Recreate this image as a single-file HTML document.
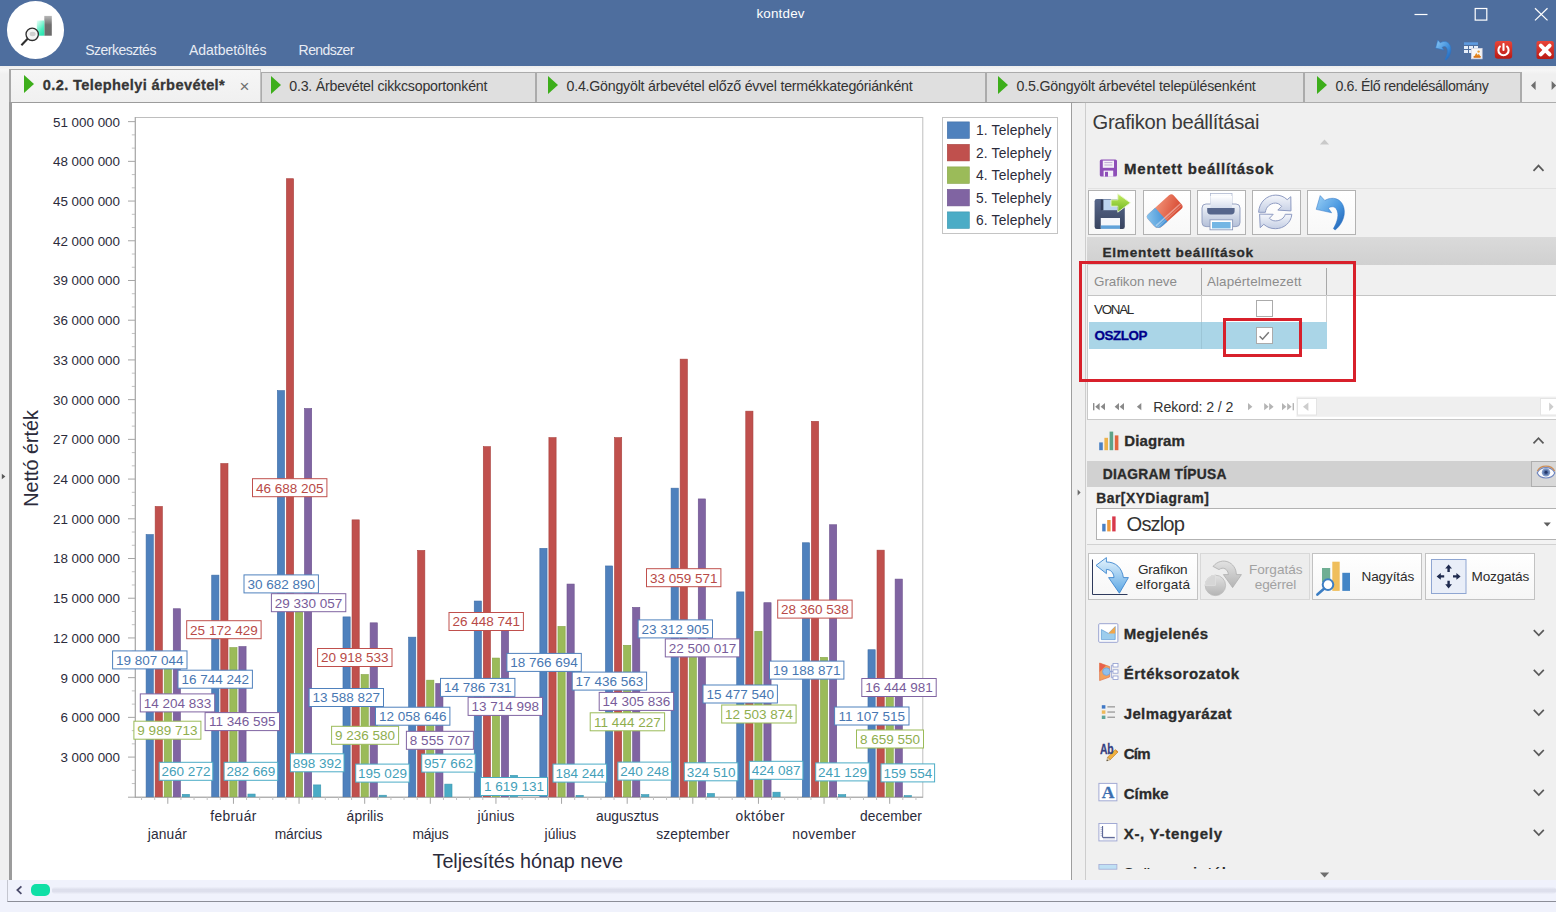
<!DOCTYPE html>
<html lang="hu">
<head>
<meta charset="utf-8">
<title>kontdev</title>
<style>
html,body{margin:0;padding:0;}
body{width:1556px;height:912px;overflow:hidden;position:relative;background:#F0F0F0;
  font-family:"Liberation Sans",sans-serif;font-size:13.4px;color:#2B2B2B;}
.abs{position:absolute;}
svg{position:absolute;overflow:visible;}
svg.chart{left:10px;top:104px;}
#titlebar{position:absolute;left:0;top:0;width:1556px;height:66px;background:#4E6E9E;}
#logo{position:absolute;left:7px;top:1.3px;width:57.4px;height:57.6px;border-radius:50%;background:#fff;}
#tabstrip{position:absolute;left:0;top:66px;width:1556px;height:38px;background:linear-gradient(#EDEDED,#F6F6F6 4px,#F0F0F0 8px);}
.tab{position:absolute;top:71.6px;height:30.4px;box-sizing:border-box;border:2px solid #ABABAB;border-top-width:1.4px;border-bottom:none;background:#DFDFDF;}
.tab.active{top:68.6px;height:33.4px;background:linear-gradient(#F6F6F6,#F0F0F0);border-color:#A8A8A8;border-right:1.2px solid #C2C2C2;}
.tri{position:absolute;width:0;height:0;border-style:solid;border-color:transparent transparent transparent #3DAE1B;border-right-width:0;}
#tabline{position:absolute;left:9px;top:101.6px;width:1547px;height:1.9px;background:linear-gradient(90deg,#9C9C9C 1063px,#ACACAC 1076px);}
#chartpanel{position:absolute;left:9px;top:103.4px;width:1063px;height:776.4px;background:#fff;border-left:3px solid #9C9C9C;border-right:1.1px solid #9E9E9E;box-sizing:border-box;}
#rightpanel{position:absolute;left:1084.7px;top:103.4px;width:472px;height:776.4px;background:#F0F0F0;border-left:1.2px solid #CDCDCD;box-sizing:border-box;}
#bottom{position:absolute;left:0;top:880px;width:1556px;height:32px;background:#F0F2FC;}
#bottomline{position:absolute;left:7px;top:880px;width:1549px;height:20.6px;border-left:1.2px solid #C4C6D0;border-bottom:1.9px solid #8C8E98;}

</style>
</head>
<body>
<div id="titlebar"></div>
<div class="abs" style="left:756.50px;top:7.26px;font-size:13.4px;line-height:1;color:#FFFFFF;white-space:pre;letter-spacing:0.178px;">kontdev</div>
<div id="logo"></div>
<svg class="ov" width="1556" height="912" viewBox="0 0 1556 912" style="left:0;top:0;pointer-events:none"><defs><linearGradient id="lgG" x1="0" y1="0" x2="0" y2="1"><stop offset="0" stop-color="#B8B8B8"/><stop offset="0.45" stop-color="#6E6E6E"/><stop offset="1" stop-color="#6A6A6A"/></linearGradient><linearGradient id="lgT" x1="0" y1="0" x2="0.6" y2="1"><stop offset="0" stop-color="#EFFFFA"/><stop offset="0.7" stop-color="#4FEEC0"/><stop offset="1" stop-color="#2FE6B2"/></linearGradient></defs><rect x="44.3" y="15.9" width="7.5" height="19.8" fill="url(#lgG)"/><rect x="36.8" y="20.5" width="7.5" height="15.2" fill="url(#lgT)"/><circle cx="32.2" cy="34.3" r="6.2" fill="#F4F4F4" fill-opacity="0.92" stroke="#2E2E2E" stroke-width="1.3"/><ellipse cx="32.6" cy="34" rx="3" ry="2.2" fill="#CFCFCF"/><line x1="27.6" y1="38.8" x2="21.4" y2="45.2" stroke="#2E2E2E" stroke-width="2.1"/></svg>
<div class="abs" style="left:85.20px;top:43.35px;font-size:14px;line-height:1;color:#E8ECF4;white-space:pre;letter-spacing:-0.505px;">Szerkesztés</div>
<div class="abs" style="left:189.00px;top:43.35px;font-size:14px;line-height:1;color:#E8ECF4;white-space:pre;letter-spacing:-0.021px;">Adatbetöltés</div>
<div class="abs" style="left:298.60px;top:43.35px;font-size:14px;line-height:1;color:#E8ECF4;white-space:pre;letter-spacing:-0.574px;">Rendszer</div>
<svg class="ov" width="1556" height="912" viewBox="0 0 1556 912" style="left:0;top:0;pointer-events:none"><defs><linearGradient id="unG" x1="0" y1="0" x2="1" y2="1"><stop offset="0" stop-color="#8CC8F4"/><stop offset="0.6" stop-color="#3E8EDC"/><stop offset="1" stop-color="#1A5CB0"/></linearGradient><linearGradient id="rdG" x1="0" y1="0" x2="0" y2="1"><stop offset="0" stop-color="#E8453A"/><stop offset="1" stop-color="#B91A14"/></linearGradient></defs><g stroke="#FFFFFF" stroke-width="1.2" fill="none"><line x1="1414.5" y1="14.5" x2="1427.5" y2="14.5"/><rect x="1475.2" y="8.5" width="11.6" height="11.6"/><line x1="1535" y1="8.2" x2="1547.5" y2="20.4"/><line x1="1547.5" y1="8.2" x2="1535" y2="20.4"/></g><path d="M1435.60 48.08 L1437.78 40.00 L1440.28 42.83 C1444.18 40.40 1449.33 41.21 1450.73 47.27 C1451.82 52.52 1449.02 57.78 1445.90 60.20 L1444.96 59.39 C1447.14 55.35 1448.39 50.91 1446.52 47.68 C1445.27 46.06 1443.71 46.46 1442.15 47.27 L1444.02 50.10 Z" fill="url(#unG)" stroke="#2D73C4" stroke-width="0.5" stroke-linejoin="round"/><g><rect x="1464" y="42.3" width="14" height="2.6" fill="#5E9BE0"/><rect x="1464" y="46" width="4" height="3" fill="#E6EEF9"/><rect x="1469" y="46" width="4" height="3" fill="#E6EEF9"/><rect x="1474" y="46" width="4" height="3" fill="#E6EEF9"/><rect x="1464" y="50" width="4" height="3" fill="#E6EEF9"/><rect x="1469" y="50" width="4" height="3" fill="#E6EEF9"/><rect x="1471.5" y="48.5" width="10.6" height="10.3" fill="#F6F6F6" stroke="#D9D9E4" stroke-width="0.8"/><path d="M1474 57 l2.2-4 1.6 2 1-1.2 2 3.2z" fill="#E58A1E"/><circle cx="1478.6" cy="51.6" r="1.2" fill="#E9A23A"/><rect x="1473.6" y="56" width="7" height="1.8" fill="#D9761A"/></g><rect x="1494.8" y="41" width="17.4" height="17.8" rx="3.2" fill="url(#rdG)"/><path d="M1499.9 46.6 a5.1 5.1 0 1 0 7.2 0" fill="none" stroke="#FFFFFF" stroke-width="2.1" stroke-linecap="round"/><line x1="1503.5" y1="44" x2="1503.5" y2="50" stroke="#FFFFFF" stroke-width="2.1" stroke-linecap="round"/><rect x="1536.5" y="41" width="17.4" height="18" rx="2" fill="url(#rdG)"/><g stroke="#FFFFFF" stroke-width="4" stroke-linecap="round"><line x1="1540.8" y1="45.6" x2="1549.6" y2="54.4"/><line x1="1549.6" y1="45.6" x2="1540.8" y2="54.4"/></g></svg>
<div id="tabstrip"></div>
<div class="tab" style="left:259.6px;width:277.4px"></div>
<div class="tab" style="left:534.6px;width:452.8px"></div>
<div class="tab" style="left:985.4px;width:320.4px"></div>
<div class="tab" style="left:1303.4px;width:219px"></div>
<div class="tab active" style="left:9px;width:251.6px"></div>
<div id="tabline"></div>
<div class="tri" style="left:24.3px;top:75.3px;border-left-width:10px;border-top-width:9.3px;border-bottom-width:9.3px"></div>
<div class="tri" style="left:271px;top:76.4px;border-left-width:10px;border-top-width:9.3px;border-bottom-width:9.3px"></div>
<div class="tri" style="left:548.2px;top:76.4px;border-left-width:10px;border-top-width:9.3px;border-bottom-width:9.3px"></div>
<div class="tri" style="left:998.4px;top:76.4px;border-left-width:10px;border-top-width:9.3px;border-bottom-width:9.3px"></div>
<div class="tri" style="left:1317.2px;top:76.4px;border-left-width:10px;border-top-width:9.3px;border-bottom-width:9.3px"></div>
<div class="abs" style="left:42.80px;top:77.94px;font-size:14.6px;line-height:1;color:#363636;white-space:pre;letter-spacing:0.377px;font-weight:bold;-webkit-text-stroke:0.3px currentColor;">0.2. Telephelyi árbevétel*</div>
<div class="abs" style="left:239.60px;top:78.21px;font-size:17px;line-height:1;color:#707070;white-space:pre;">×</div>
<div class="abs" style="left:289.30px;top:79.38px;font-size:14.2px;line-height:1;color:#333;white-space:pre;letter-spacing:-0.223px;">0.3. Árbevétel cikkcsoportonként</div>
<div class="abs" style="left:566.50px;top:79.38px;font-size:14.2px;line-height:1;color:#333;white-space:pre;letter-spacing:-0.220px;">0.4.Göngyölt árbevétel előző évvel termékkategóriánként</div>
<div class="abs" style="left:1016.50px;top:79.38px;font-size:14.2px;line-height:1;color:#333;white-space:pre;letter-spacing:-0.184px;">0.5.Göngyölt árbevétel településenként</div>
<div class="abs" style="left:1335.50px;top:79.38px;font-size:14.2px;line-height:1;color:#333;white-space:pre;letter-spacing:-0.413px;">0.6. Élő rendelésállomány</div>
<svg class="ov" width="1556" height="912" viewBox="0 0 1556 912" style="left:0;top:0;pointer-events:none"><path d="M1531 85.5 l4.6-4.6 v9.2z" fill="#6E6E6E"/><path d="M1551.6 80.9 v9.2 l4.6-4.6z" fill="#6E6E6E"/></svg>
<div id="chartpanel"></div>
<svg class="chart" width="1062" height="776" viewBox="10 104 1062 776" font-family="'Liberation Sans', sans-serif" shape-rendering="crispEdges">
<rect x="135.3" y="117.5" width="787.5" height="679.8" fill="#fff" stroke="#BEBEBE" stroke-width="1" shape-rendering="auto"/>
<g stroke="#A6A6A6" stroke-width="1" shape-rendering="auto">
<line x1="131.8" x2="135" y1="783.56" y2="783.56" stroke="#C2C2C2"/>
<line x1="131.8" x2="135" y1="770.32" y2="770.32" stroke="#C2C2C2"/>
<line x1="128" x2="135" y1="757.08" y2="757.08"/>
<line x1="131.8" x2="135" y1="743.85" y2="743.85" stroke="#C2C2C2"/>
<line x1="131.8" x2="135" y1="730.61" y2="730.61" stroke="#C2C2C2"/>
<line x1="128" x2="135" y1="717.37" y2="717.37"/>
<line x1="131.8" x2="135" y1="704.13" y2="704.13" stroke="#C2C2C2"/>
<line x1="131.8" x2="135" y1="690.89" y2="690.89" stroke="#C2C2C2"/>
<line x1="128" x2="135" y1="677.65" y2="677.65"/>
<line x1="131.8" x2="135" y1="664.41" y2="664.41" stroke="#C2C2C2"/>
<line x1="131.8" x2="135" y1="651.18" y2="651.18" stroke="#C2C2C2"/>
<line x1="128" x2="135" y1="637.94" y2="637.94"/>
<line x1="131.8" x2="135" y1="624.7" y2="624.7" stroke="#C2C2C2"/>
<line x1="131.8" x2="135" y1="611.46" y2="611.46" stroke="#C2C2C2"/>
<line x1="128" x2="135" y1="598.22" y2="598.22"/>
<line x1="131.8" x2="135" y1="584.98" y2="584.98" stroke="#C2C2C2"/>
<line x1="131.8" x2="135" y1="571.74" y2="571.74" stroke="#C2C2C2"/>
<line x1="128" x2="135" y1="558.51" y2="558.51"/>
<line x1="131.8" x2="135" y1="545.27" y2="545.27" stroke="#C2C2C2"/>
<line x1="131.8" x2="135" y1="532.03" y2="532.03" stroke="#C2C2C2"/>
<line x1="128" x2="135" y1="518.79" y2="518.79"/>
<line x1="131.8" x2="135" y1="505.55" y2="505.55" stroke="#C2C2C2"/>
<line x1="131.8" x2="135" y1="492.31" y2="492.31" stroke="#C2C2C2"/>
<line x1="128" x2="135" y1="479.07" y2="479.07"/>
<line x1="131.8" x2="135" y1="465.83" y2="465.83" stroke="#C2C2C2"/>
<line x1="131.8" x2="135" y1="452.6" y2="452.6" stroke="#C2C2C2"/>
<line x1="128" x2="135" y1="439.36" y2="439.36"/>
<line x1="131.8" x2="135" y1="426.12" y2="426.12" stroke="#C2C2C2"/>
<line x1="131.8" x2="135" y1="412.88" y2="412.88" stroke="#C2C2C2"/>
<line x1="128" x2="135" y1="399.64" y2="399.64"/>
<line x1="131.8" x2="135" y1="386.4" y2="386.4" stroke="#C2C2C2"/>
<line x1="131.8" x2="135" y1="373.16" y2="373.16" stroke="#C2C2C2"/>
<line x1="128" x2="135" y1="359.93" y2="359.93"/>
<line x1="131.8" x2="135" y1="346.69" y2="346.69" stroke="#C2C2C2"/>
<line x1="131.8" x2="135" y1="333.45" y2="333.45" stroke="#C2C2C2"/>
<line x1="128" x2="135" y1="320.21" y2="320.21"/>
<line x1="131.8" x2="135" y1="306.97" y2="306.97" stroke="#C2C2C2"/>
<line x1="131.8" x2="135" y1="293.73" y2="293.73" stroke="#C2C2C2"/>
<line x1="128" x2="135" y1="280.49" y2="280.49"/>
<line x1="131.8" x2="135" y1="267.26" y2="267.26" stroke="#C2C2C2"/>
<line x1="131.8" x2="135" y1="254.02" y2="254.02" stroke="#C2C2C2"/>
<line x1="128" x2="135" y1="240.78" y2="240.78"/>
<line x1="131.8" x2="135" y1="227.54" y2="227.54" stroke="#C2C2C2"/>
<line x1="131.8" x2="135" y1="214.3" y2="214.3" stroke="#C2C2C2"/>
<line x1="128" x2="135" y1="201.06" y2="201.06"/>
<line x1="131.8" x2="135" y1="187.82" y2="187.82" stroke="#C2C2C2"/>
<line x1="131.8" x2="135" y1="174.59" y2="174.59" stroke="#C2C2C2"/>
<line x1="128" x2="135" y1="161.35" y2="161.35"/>
<line x1="131.8" x2="135" y1="148.11" y2="148.11" stroke="#C2C2C2"/>
<line x1="131.8" x2="135" y1="134.87" y2="134.87" stroke="#C2C2C2"/>
<line x1="128" x2="135" y1="121.63" y2="121.63"/>
<line x1="135.3" x2="135.3" y1="117.0" y2="797.6999999999999"/>
<line x1="128" x2="923.0" y1="797.1999999999999" y2="797.1999999999999"/>
<line x1="167.81" x2="167.81" y1="797.1999999999999" y2="803.8"/>
<line x1="141.56" x2="141.56" y1="797.1999999999999" y2="800.0" stroke="#C2C2C2"/>
<line x1="154.69" x2="154.69" y1="797.1999999999999" y2="800.0" stroke="#C2C2C2"/>
<line x1="180.94" x2="180.94" y1="797.1999999999999" y2="800.0" stroke="#C2C2C2"/>
<line x1="194.06" x2="194.06" y1="797.1999999999999" y2="800.0" stroke="#C2C2C2"/>
<line x1="233.44" x2="233.44" y1="797.1999999999999" y2="803.8"/>
<line x1="207.19" x2="207.19" y1="797.1999999999999" y2="800.0" stroke="#C2C2C2"/>
<line x1="220.31" x2="220.31" y1="797.1999999999999" y2="800.0" stroke="#C2C2C2"/>
<line x1="246.56" x2="246.56" y1="797.1999999999999" y2="800.0" stroke="#C2C2C2"/>
<line x1="259.69" x2="259.69" y1="797.1999999999999" y2="800.0" stroke="#C2C2C2"/>
<line x1="299.06" x2="299.06" y1="797.1999999999999" y2="803.8"/>
<line x1="272.81" x2="272.81" y1="797.1999999999999" y2="800.0" stroke="#C2C2C2"/>
<line x1="285.94" x2="285.94" y1="797.1999999999999" y2="800.0" stroke="#C2C2C2"/>
<line x1="312.19" x2="312.19" y1="797.1999999999999" y2="800.0" stroke="#C2C2C2"/>
<line x1="325.31" x2="325.31" y1="797.1999999999999" y2="800.0" stroke="#C2C2C2"/>
<line x1="364.69" x2="364.69" y1="797.1999999999999" y2="803.8"/>
<line x1="338.44" x2="338.44" y1="797.1999999999999" y2="800.0" stroke="#C2C2C2"/>
<line x1="351.56" x2="351.56" y1="797.1999999999999" y2="800.0" stroke="#C2C2C2"/>
<line x1="377.81" x2="377.81" y1="797.1999999999999" y2="800.0" stroke="#C2C2C2"/>
<line x1="390.94" x2="390.94" y1="797.1999999999999" y2="800.0" stroke="#C2C2C2"/>
<line x1="430.31" x2="430.31" y1="797.1999999999999" y2="803.8"/>
<line x1="404.06" x2="404.06" y1="797.1999999999999" y2="800.0" stroke="#C2C2C2"/>
<line x1="417.19" x2="417.19" y1="797.1999999999999" y2="800.0" stroke="#C2C2C2"/>
<line x1="443.44" x2="443.44" y1="797.1999999999999" y2="800.0" stroke="#C2C2C2"/>
<line x1="456.56" x2="456.56" y1="797.1999999999999" y2="800.0" stroke="#C2C2C2"/>
<line x1="495.94" x2="495.94" y1="797.1999999999999" y2="803.8"/>
<line x1="469.69" x2="469.69" y1="797.1999999999999" y2="800.0" stroke="#C2C2C2"/>
<line x1="482.81" x2="482.81" y1="797.1999999999999" y2="800.0" stroke="#C2C2C2"/>
<line x1="509.06" x2="509.06" y1="797.1999999999999" y2="800.0" stroke="#C2C2C2"/>
<line x1="522.19" x2="522.19" y1="797.1999999999999" y2="800.0" stroke="#C2C2C2"/>
<line x1="561.56" x2="561.56" y1="797.1999999999999" y2="803.8"/>
<line x1="535.31" x2="535.31" y1="797.1999999999999" y2="800.0" stroke="#C2C2C2"/>
<line x1="548.44" x2="548.44" y1="797.1999999999999" y2="800.0" stroke="#C2C2C2"/>
<line x1="574.69" x2="574.69" y1="797.1999999999999" y2="800.0" stroke="#C2C2C2"/>
<line x1="587.81" x2="587.81" y1="797.1999999999999" y2="800.0" stroke="#C2C2C2"/>
<line x1="627.19" x2="627.19" y1="797.1999999999999" y2="803.8"/>
<line x1="600.94" x2="600.94" y1="797.1999999999999" y2="800.0" stroke="#C2C2C2"/>
<line x1="614.06" x2="614.06" y1="797.1999999999999" y2="800.0" stroke="#C2C2C2"/>
<line x1="640.31" x2="640.31" y1="797.1999999999999" y2="800.0" stroke="#C2C2C2"/>
<line x1="653.44" x2="653.44" y1="797.1999999999999" y2="800.0" stroke="#C2C2C2"/>
<line x1="692.81" x2="692.81" y1="797.1999999999999" y2="803.8"/>
<line x1="666.56" x2="666.56" y1="797.1999999999999" y2="800.0" stroke="#C2C2C2"/>
<line x1="679.69" x2="679.69" y1="797.1999999999999" y2="800.0" stroke="#C2C2C2"/>
<line x1="705.94" x2="705.94" y1="797.1999999999999" y2="800.0" stroke="#C2C2C2"/>
<line x1="719.06" x2="719.06" y1="797.1999999999999" y2="800.0" stroke="#C2C2C2"/>
<line x1="758.44" x2="758.44" y1="797.1999999999999" y2="803.8"/>
<line x1="732.19" x2="732.19" y1="797.1999999999999" y2="800.0" stroke="#C2C2C2"/>
<line x1="745.31" x2="745.31" y1="797.1999999999999" y2="800.0" stroke="#C2C2C2"/>
<line x1="771.56" x2="771.56" y1="797.1999999999999" y2="800.0" stroke="#C2C2C2"/>
<line x1="784.69" x2="784.69" y1="797.1999999999999" y2="800.0" stroke="#C2C2C2"/>
<line x1="824.06" x2="824.06" y1="797.1999999999999" y2="803.8"/>
<line x1="797.81" x2="797.81" y1="797.1999999999999" y2="800.0" stroke="#C2C2C2"/>
<line x1="810.94" x2="810.94" y1="797.1999999999999" y2="800.0" stroke="#C2C2C2"/>
<line x1="837.19" x2="837.19" y1="797.1999999999999" y2="800.0" stroke="#C2C2C2"/>
<line x1="850.31" x2="850.31" y1="797.1999999999999" y2="800.0" stroke="#C2C2C2"/>
<line x1="889.69" x2="889.69" y1="797.1999999999999" y2="803.8"/>
<line x1="863.44" x2="863.44" y1="797.1999999999999" y2="800.0" stroke="#C2C2C2"/>
<line x1="876.56" x2="876.56" y1="797.1999999999999" y2="800.0" stroke="#C2C2C2"/>
<line x1="902.81" x2="902.81" y1="797.1999999999999" y2="800.0" stroke="#C2C2C2"/>
<line x1="915.94" x2="915.94" y1="797.1999999999999" y2="800.0" stroke="#C2C2C2"/>
</g>
<g font-size="13.4" fill="#2B2B3B" text-anchor="end" shape-rendering="auto">
<text x="120" y="762.0">3 000 000</text>
<text x="120" y="722.3">6 000 000</text>
<text x="120" y="682.6">9 000 000</text>
<text x="120" y="642.8">12 000 000</text>
<text x="120" y="603.1">15 000 000</text>
<text x="120" y="563.4">18 000 000</text>
<text x="120" y="523.7">21 000 000</text>
<text x="120" y="484.0">24 000 000</text>
<text x="120" y="444.3">27 000 000</text>
<text x="120" y="404.5">30 000 000</text>
<text x="120" y="364.8">33 000 000</text>
<text x="120" y="325.1">36 000 000</text>
<text x="120" y="285.4">39 000 000</text>
<text x="120" y="245.7">42 000 000</text>
<text x="120" y="206.0">45 000 000</text>
<text x="120" y="166.2">48 000 000</text>
<text x="120" y="126.5">51 000 000</text>
</g>
<rect x="146.10" y="534.58" width="7.2" height="262.22" fill="#4F81BD" stroke="#3E6DA6" stroke-width="0.6" shape-rendering="auto"/>
<rect x="155.15" y="506.48" width="7.2" height="290.32" fill="#C0504D" stroke="#A8403D" stroke-width="0.6" shape-rendering="auto"/>
<rect x="164.20" y="664.55" width="7.2" height="132.25" fill="#9BBB59" stroke="#85A446" stroke-width="0.6" shape-rendering="auto"/>
<rect x="173.25" y="608.75" width="7.2" height="188.05" fill="#8064A2" stroke="#6B518C" stroke-width="0.6" shape-rendering="auto"/>
<rect x="182.30" y="794.35" width="7.2" height="2.45" fill="#4BACC6" stroke="#3A96AF" stroke-width="0.6" shape-rendering="auto"/>
<rect x="211.72" y="575.13" width="7.2" height="221.67" fill="#4F81BD" stroke="#3E6DA6" stroke-width="0.6" shape-rendering="auto"/>
<rect x="220.78" y="463.55" width="7.2" height="333.25" fill="#C0504D" stroke="#A8403D" stroke-width="0.6" shape-rendering="auto"/>
<rect x="229.82" y="647.60" width="7.2" height="149.20" fill="#9BBB59" stroke="#85A446" stroke-width="0.6" shape-rendering="auto"/>
<rect x="238.88" y="646.59" width="7.2" height="150.21" fill="#8064A2" stroke="#6B518C" stroke-width="0.6" shape-rendering="auto"/>
<rect x="247.93" y="794.06" width="7.2" height="2.74" fill="#4BACC6" stroke="#3A96AF" stroke-width="0.6" shape-rendering="auto"/>
<rect x="277.35" y="390.60" width="7.2" height="406.20" fill="#4F81BD" stroke="#3E6DA6" stroke-width="0.6" shape-rendering="auto"/>
<rect x="286.40" y="178.71" width="7.2" height="618.09" fill="#C0504D" stroke="#A8403D" stroke-width="0.6" shape-rendering="auto"/>
<rect x="295.45" y="598.22" width="7.2" height="198.58" fill="#9BBB59" stroke="#85A446" stroke-width="0.6" shape-rendering="auto"/>
<rect x="304.50" y="408.51" width="7.2" height="388.29" fill="#8064A2" stroke="#6B518C" stroke-width="0.6" shape-rendering="auto"/>
<rect x="313.55" y="784.91" width="7.2" height="11.89" fill="#4BACC6" stroke="#3A96AF" stroke-width="0.6" shape-rendering="auto"/>
<rect x="342.98" y="616.90" width="7.2" height="179.90" fill="#4F81BD" stroke="#3E6DA6" stroke-width="0.6" shape-rendering="auto"/>
<rect x="352.03" y="519.87" width="7.2" height="276.93" fill="#C0504D" stroke="#A8403D" stroke-width="0.6" shape-rendering="auto"/>
<rect x="361.08" y="674.52" width="7.2" height="122.28" fill="#9BBB59" stroke="#85A446" stroke-width="0.6" shape-rendering="auto"/>
<rect x="370.12" y="622.84" width="7.2" height="173.96" fill="#8064A2" stroke="#6B518C" stroke-width="0.6" shape-rendering="auto"/>
<rect x="379.18" y="795.22" width="7.2" height="1.58" fill="#4BACC6" stroke="#3A96AF" stroke-width="0.6" shape-rendering="auto"/>
<rect x="408.60" y="637.16" width="7.2" height="159.64" fill="#4F81BD" stroke="#3E6DA6" stroke-width="0.6" shape-rendering="auto"/>
<rect x="417.65" y="550.43" width="7.2" height="246.37" fill="#C0504D" stroke="#A8403D" stroke-width="0.6" shape-rendering="auto"/>
<rect x="426.70" y="680.17" width="7.2" height="116.63" fill="#9BBB59" stroke="#85A446" stroke-width="0.6" shape-rendering="auto"/>
<rect x="435.75" y="683.53" width="7.2" height="113.27" fill="#8064A2" stroke="#6B518C" stroke-width="0.6" shape-rendering="auto"/>
<rect x="444.80" y="784.12" width="7.2" height="12.68" fill="#4BACC6" stroke="#3A96AF" stroke-width="0.6" shape-rendering="auto"/>
<rect x="474.23" y="601.04" width="7.2" height="195.76" fill="#4F81BD" stroke="#3E6DA6" stroke-width="0.6" shape-rendering="auto"/>
<rect x="483.28" y="446.66" width="7.2" height="350.14" fill="#C0504D" stroke="#A8403D" stroke-width="0.6" shape-rendering="auto"/>
<rect x="492.33" y="658.06" width="7.2" height="138.74" fill="#9BBB59" stroke="#85A446" stroke-width="0.6" shape-rendering="auto"/>
<rect x="501.38" y="615.23" width="7.2" height="181.57" fill="#8064A2" stroke="#6B518C" stroke-width="0.6" shape-rendering="auto"/>
<rect x="510.43" y="775.36" width="7.2" height="21.44" fill="#4BACC6" stroke="#3A96AF" stroke-width="0.6" shape-rendering="auto"/>
<rect x="539.85" y="548.36" width="7.2" height="248.44" fill="#4F81BD" stroke="#3E6DA6" stroke-width="0.6" shape-rendering="auto"/>
<rect x="548.90" y="437.64" width="7.2" height="359.16" fill="#C0504D" stroke="#A8403D" stroke-width="0.6" shape-rendering="auto"/>
<rect x="557.95" y="626.42" width="7.2" height="170.38" fill="#9BBB59" stroke="#85A446" stroke-width="0.6" shape-rendering="auto"/>
<rect x="567.00" y="584.06" width="7.2" height="212.74" fill="#8064A2" stroke="#6B518C" stroke-width="0.6" shape-rendering="auto"/>
<rect x="576.05" y="795.36" width="7.2" height="1.44" fill="#4BACC6" stroke="#3A96AF" stroke-width="0.6" shape-rendering="auto"/>
<rect x="605.48" y="565.96" width="7.2" height="230.84" fill="#4F81BD" stroke="#3E6DA6" stroke-width="0.6" shape-rendering="auto"/>
<rect x="614.52" y="437.64" width="7.2" height="359.16" fill="#C0504D" stroke="#A8403D" stroke-width="0.6" shape-rendering="auto"/>
<rect x="623.58" y="645.29" width="7.2" height="151.51" fill="#9BBB59" stroke="#85A446" stroke-width="0.6" shape-rendering="auto"/>
<rect x="632.62" y="607.41" width="7.2" height="189.39" fill="#8064A2" stroke="#6B518C" stroke-width="0.6" shape-rendering="auto"/>
<rect x="641.68" y="794.62" width="7.2" height="2.18" fill="#4BACC6" stroke="#3A96AF" stroke-width="0.6" shape-rendering="auto"/>
<rect x="671.10" y="488.17" width="7.2" height="308.63" fill="#4F81BD" stroke="#3E6DA6" stroke-width="0.6" shape-rendering="auto"/>
<rect x="680.15" y="359.14" width="7.2" height="437.66" fill="#C0504D" stroke="#A8403D" stroke-width="0.6" shape-rendering="auto"/>
<rect x="689.20" y="644.56" width="7.2" height="152.24" fill="#9BBB59" stroke="#85A446" stroke-width="0.6" shape-rendering="auto"/>
<rect x="698.25" y="498.93" width="7.2" height="297.87" fill="#8064A2" stroke="#6B518C" stroke-width="0.6" shape-rendering="auto"/>
<rect x="707.30" y="793.50" width="7.2" height="3.30" fill="#4BACC6" stroke="#3A96AF" stroke-width="0.6" shape-rendering="auto"/>
<rect x="736.73" y="591.90" width="7.2" height="204.90" fill="#4F81BD" stroke="#3E6DA6" stroke-width="0.6" shape-rendering="auto"/>
<rect x="745.77" y="411.16" width="7.2" height="385.64" fill="#C0504D" stroke="#A8403D" stroke-width="0.6" shape-rendering="auto"/>
<rect x="754.83" y="631.27" width="7.2" height="165.53" fill="#9BBB59" stroke="#85A446" stroke-width="0.6" shape-rendering="auto"/>
<rect x="763.88" y="602.72" width="7.2" height="194.08" fill="#8064A2" stroke="#6B518C" stroke-width="0.6" shape-rendering="auto"/>
<rect x="772.93" y="792.19" width="7.2" height="4.61" fill="#4BACC6" stroke="#3A96AF" stroke-width="0.6" shape-rendering="auto"/>
<rect x="802.35" y="542.77" width="7.2" height="254.03" fill="#4F81BD" stroke="#3E6DA6" stroke-width="0.6" shape-rendering="auto"/>
<rect x="811.40" y="421.35" width="7.2" height="375.45" fill="#C0504D" stroke="#A8403D" stroke-width="0.6" shape-rendering="auto"/>
<rect x="820.45" y="657.40" width="7.2" height="139.40" fill="#9BBB59" stroke="#85A446" stroke-width="0.6" shape-rendering="auto"/>
<rect x="829.50" y="524.75" width="7.2" height="272.05" fill="#8064A2" stroke="#6B518C" stroke-width="0.6" shape-rendering="auto"/>
<rect x="838.55" y="794.61" width="7.2" height="2.19" fill="#4BACC6" stroke="#3A96AF" stroke-width="0.6" shape-rendering="auto"/>
<rect x="867.98" y="649.75" width="7.2" height="147.05" fill="#4F81BD" stroke="#3E6DA6" stroke-width="0.6" shape-rendering="auto"/>
<rect x="877.02" y="550.16" width="7.2" height="246.64" fill="#C0504D" stroke="#A8403D" stroke-width="0.6" shape-rendering="auto"/>
<rect x="886.08" y="682.16" width="7.2" height="114.64" fill="#9BBB59" stroke="#85A446" stroke-width="0.6" shape-rendering="auto"/>
<rect x="895.12" y="579.09" width="7.2" height="217.71" fill="#8064A2" stroke="#6B518C" stroke-width="0.6" shape-rendering="auto"/>
<rect x="904.18" y="795.60" width="7.2" height="1.20" fill="#4BACC6" stroke="#3A96AF" stroke-width="0.6" shape-rendering="auto"/>
<g font-size="13.8" fill="#2B2B3B" text-anchor="middle" shape-rendering="auto">
<text x="167.3" y="839.4" textLength="39.1" lengthAdjust="spacing">január</text>
<text x="233.3" y="820.6" textLength="46.1" lengthAdjust="spacing">február</text>
<text x="298.5" y="839.4" textLength="47.5" lengthAdjust="spacing">március</text>
<text x="365.0" y="820.6" textLength="36.8" lengthAdjust="spacing">április</text>
<text x="430.5" y="839.4" textLength="36.1" lengthAdjust="spacing">május</text>
<text x="496.0" y="820.6" textLength="36.8" lengthAdjust="spacing">június</text>
<text x="560.4" y="839.4" textLength="31.7" lengthAdjust="spacing">július</text>
<text x="627.3" y="820.6" textLength="62.5" lengthAdjust="spacing">augusztus</text>
<text x="692.9" y="839.4" textLength="73.2" lengthAdjust="spacing">szeptember</text>
<text x="760.0" y="820.6" textLength="49.1" lengthAdjust="spacing">október</text>
<text x="824.0" y="839.4" textLength="63.5" lengthAdjust="spacing">november</text>
<text x="891.0" y="820.6" textLength="61.8" lengthAdjust="spacing">december</text>
</g>
<text x="527.8" y="868.4" font-size="19.8" textLength="190.5" lengthAdjust="spacing" fill="#2B2B3B" text-anchor="middle" shape-rendering="auto">Teljesítés hónap neve</text>
<text transform="translate(37.8,458.4) rotate(-90)" font-size="19.8" textLength="96.5" lengthAdjust="spacing" fill="#2B2B3B" text-anchor="middle" shape-rendering="auto">Nettó érték</text>
<rect x="112.60" y="650.90" width="74.40" height="18.00" fill="#fff" stroke="#4F81BD" stroke-width="1" shape-rendering="auto"/>
<text x="149.80" y="664.75" font-size="13.5" fill="#4877B2" text-anchor="middle" shape-rendering="auto">19 807 044</text>
<rect x="140.30" y="693.90" width="74.40" height="18.00" fill="#fff" stroke="#8064A2" stroke-width="1" shape-rendering="auto"/>
<text x="177.50" y="707.75" font-size="13.5" fill="#785C9A" text-anchor="middle" shape-rendering="auto">14 204 833</text>
<rect x="133.90" y="721.20" width="67.00" height="18.00" fill="#fff" stroke="#9BBB59" stroke-width="1" shape-rendering="auto"/>
<text x="167.40" y="735.05" font-size="13.5" fill="#8FAE4E" text-anchor="middle" shape-rendering="auto">9 989 713</text>
<rect x="159.20" y="762.30" width="53.60" height="18.00" fill="#fff" stroke="#4BACC6" stroke-width="1" shape-rendering="auto"/>
<text x="186.00" y="776.15" font-size="13.5" fill="#449FB9" text-anchor="middle" shape-rendering="auto">260 272</text>
<rect x="186.70" y="620.70" width="74.40" height="18.00" fill="#fff" stroke="#C0504D" stroke-width="1" shape-rendering="auto"/>
<text x="223.90" y="634.55" font-size="13.5" fill="#B84A47" text-anchor="middle" shape-rendering="auto">25 172 429</text>
<rect x="178.00" y="670.20" width="74.40" height="18.00" fill="#fff" stroke="#4F81BD" stroke-width="1" shape-rendering="auto"/>
<text x="215.20" y="684.05" font-size="13.5" fill="#4877B2" text-anchor="middle" shape-rendering="auto">16 744 242</text>
<rect x="205.10" y="712.60" width="74.40" height="18.00" fill="#fff" stroke="#8064A2" stroke-width="1" shape-rendering="auto"/>
<text x="242.30" y="726.45" font-size="13.5" fill="#785C9A" text-anchor="middle" shape-rendering="auto">11 346 595</text>
<rect x="224.10" y="762.30" width="53.60" height="18.00" fill="#fff" stroke="#4BACC6" stroke-width="1" shape-rendering="auto"/>
<text x="250.90" y="776.15" font-size="13.5" fill="#449FB9" text-anchor="middle" shape-rendering="auto">282 669</text>
<rect x="252.50" y="478.70" width="74.40" height="18.00" fill="#fff" stroke="#C0504D" stroke-width="1" shape-rendering="auto"/>
<text x="289.70" y="492.55" font-size="13.5" fill="#B84A47" text-anchor="middle" shape-rendering="auto">46 688 205</text>
<rect x="244.00" y="574.90" width="74.40" height="18.00" fill="#fff" stroke="#4F81BD" stroke-width="1" shape-rendering="auto"/>
<text x="281.20" y="588.75" font-size="13.5" fill="#4877B2" text-anchor="middle" shape-rendering="auto">30 682 890</text>
<rect x="271.40" y="593.70" width="74.40" height="18.00" fill="#fff" stroke="#8064A2" stroke-width="1" shape-rendering="auto"/>
<text x="308.60" y="607.55" font-size="13.5" fill="#785C9A" text-anchor="middle" shape-rendering="auto">29 330 057</text>
<rect x="290.40" y="753.80" width="53.60" height="18.00" fill="#fff" stroke="#4BACC6" stroke-width="1" shape-rendering="auto"/>
<text x="317.20" y="767.65" font-size="13.5" fill="#449FB9" text-anchor="middle" shape-rendering="auto">898 392</text>
<rect x="317.60" y="648.50" width="74.40" height="18.00" fill="#fff" stroke="#C0504D" stroke-width="1" shape-rendering="auto"/>
<text x="354.80" y="662.35" font-size="13.5" fill="#B84A47" text-anchor="middle" shape-rendering="auto">20 918 533</text>
<rect x="309.10" y="688.50" width="74.40" height="18.00" fill="#fff" stroke="#4F81BD" stroke-width="1" shape-rendering="auto"/>
<text x="346.30" y="702.35" font-size="13.5" fill="#4877B2" text-anchor="middle" shape-rendering="auto">13 588 827</text>
<rect x="331.60" y="726.30" width="67.00" height="18.00" fill="#fff" stroke="#9BBB59" stroke-width="1" shape-rendering="auto"/>
<text x="365.10" y="740.15" font-size="13.5" fill="#8FAE4E" text-anchor="middle" shape-rendering="auto">9 236 580</text>
<rect x="355.70" y="764.10" width="53.60" height="18.00" fill="#fff" stroke="#4BACC6" stroke-width="1" shape-rendering="auto"/>
<text x="382.50" y="777.95" font-size="13.5" fill="#449FB9" text-anchor="middle" shape-rendering="auto">195 029</text>
<rect x="375.50" y="707.20" width="74.40" height="18.00" fill="#fff" stroke="#4F81BD" stroke-width="1" shape-rendering="auto"/>
<text x="412.70" y="721.05" font-size="13.5" fill="#4877B2" text-anchor="middle" shape-rendering="auto">12 058 646</text>
<rect x="406.40" y="731.30" width="67.00" height="18.00" fill="#fff" stroke="#8064A2" stroke-width="1" shape-rendering="auto"/>
<text x="439.90" y="745.15" font-size="13.5" fill="#785C9A" text-anchor="middle" shape-rendering="auto">8 555 707</text>
<rect x="421.70" y="754.10" width="53.60" height="18.00" fill="#fff" stroke="#4BACC6" stroke-width="1" shape-rendering="auto"/>
<text x="448.50" y="767.95" font-size="13.5" fill="#449FB9" text-anchor="middle" shape-rendering="auto">957 662</text>
<rect x="449.00" y="612.50" width="74.40" height="18.00" fill="#fff" stroke="#C0504D" stroke-width="1" shape-rendering="auto"/>
<text x="486.20" y="626.35" font-size="13.5" fill="#B84A47" text-anchor="middle" shape-rendering="auto">26 448 741</text>
<rect x="440.50" y="678.40" width="74.40" height="18.00" fill="#fff" stroke="#4F81BD" stroke-width="1" shape-rendering="auto"/>
<text x="477.70" y="692.25" font-size="13.5" fill="#4877B2" text-anchor="middle" shape-rendering="auto">14 786 731</text>
<rect x="468.10" y="697.40" width="74.40" height="18.00" fill="#fff" stroke="#8064A2" stroke-width="1" shape-rendering="auto"/>
<text x="505.30" y="711.25" font-size="13.5" fill="#785C9A" text-anchor="middle" shape-rendering="auto">13 714 998</text>
<rect x="480.50" y="777.50" width="67.00" height="18.00" fill="#fff" stroke="#4BACC6" stroke-width="1" shape-rendering="auto"/>
<text x="514.00" y="791.35" font-size="13.5" fill="#449FB9" text-anchor="middle" shape-rendering="auto">1 619 131</text>
<rect x="506.90" y="653.40" width="74.40" height="18.00" fill="#fff" stroke="#4F81BD" stroke-width="1" shape-rendering="auto"/>
<text x="544.10" y="667.25" font-size="13.5" fill="#4877B2" text-anchor="middle" shape-rendering="auto">18 766 694</text>
<rect x="553.00" y="764.10" width="53.60" height="18.00" fill="#fff" stroke="#4BACC6" stroke-width="1" shape-rendering="auto"/>
<text x="579.80" y="777.95" font-size="13.5" fill="#449FB9" text-anchor="middle" shape-rendering="auto">184 244</text>
<rect x="572.20" y="672.10" width="74.40" height="18.00" fill="#fff" stroke="#4F81BD" stroke-width="1" shape-rendering="auto"/>
<text x="609.40" y="685.95" font-size="13.5" fill="#4877B2" text-anchor="middle" shape-rendering="auto">17 436 563</text>
<rect x="599.20" y="692.40" width="74.40" height="18.00" fill="#fff" stroke="#8064A2" stroke-width="1" shape-rendering="auto"/>
<text x="636.40" y="706.25" font-size="13.5" fill="#785C9A" text-anchor="middle" shape-rendering="auto">14 305 836</text>
<rect x="590.20" y="712.80" width="74.40" height="18.00" fill="#fff" stroke="#9BBB59" stroke-width="1" shape-rendering="auto"/>
<text x="627.40" y="726.65" font-size="13.5" fill="#8FAE4E" text-anchor="middle" shape-rendering="auto">11 444 227</text>
<rect x="617.90" y="762.10" width="53.60" height="18.00" fill="#fff" stroke="#4BACC6" stroke-width="1" shape-rendering="auto"/>
<text x="644.70" y="775.95" font-size="13.5" fill="#449FB9" text-anchor="middle" shape-rendering="auto">240 248</text>
<rect x="646.50" y="568.70" width="74.40" height="18.00" fill="#fff" stroke="#C0504D" stroke-width="1" shape-rendering="auto"/>
<text x="683.70" y="582.55" font-size="13.5" fill="#B84A47" text-anchor="middle" shape-rendering="auto">33 059 571</text>
<rect x="638.10" y="619.90" width="74.40" height="18.00" fill="#fff" stroke="#4F81BD" stroke-width="1" shape-rendering="auto"/>
<text x="675.30" y="633.75" font-size="13.5" fill="#4877B2" text-anchor="middle" shape-rendering="auto">23 312 905</text>
<rect x="665.30" y="638.90" width="74.40" height="18.00" fill="#fff" stroke="#8064A2" stroke-width="1" shape-rendering="auto"/>
<text x="702.50" y="652.75" font-size="13.5" fill="#785C9A" text-anchor="middle" shape-rendering="auto">22 500 017</text>
<rect x="684.30" y="762.80" width="53.60" height="18.00" fill="#fff" stroke="#4BACC6" stroke-width="1" shape-rendering="auto"/>
<text x="711.10" y="776.65" font-size="13.5" fill="#449FB9" text-anchor="middle" shape-rendering="auto">324 510</text>
<rect x="703.00" y="685.00" width="74.40" height="18.00" fill="#fff" stroke="#4F81BD" stroke-width="1" shape-rendering="auto"/>
<text x="740.20" y="698.85" font-size="13.5" fill="#4877B2" text-anchor="middle" shape-rendering="auto">15 477 540</text>
<rect x="721.70" y="705.00" width="74.40" height="18.00" fill="#fff" stroke="#9BBB59" stroke-width="1" shape-rendering="auto"/>
<text x="758.90" y="718.85" font-size="13.5" fill="#8FAE4E" text-anchor="middle" shape-rendering="auto">12 503 874</text>
<rect x="749.30" y="761.30" width="53.60" height="18.00" fill="#fff" stroke="#4BACC6" stroke-width="1" shape-rendering="auto"/>
<text x="776.10" y="775.15" font-size="13.5" fill="#449FB9" text-anchor="middle" shape-rendering="auto">424 087</text>
<rect x="777.70" y="600.10" width="74.40" height="18.00" fill="#fff" stroke="#C0504D" stroke-width="1" shape-rendering="auto"/>
<text x="814.90" y="613.95" font-size="13.5" fill="#B84A47" text-anchor="middle" shape-rendering="auto">28 360 538</text>
<rect x="769.50" y="661.10" width="74.40" height="18.00" fill="#fff" stroke="#4F81BD" stroke-width="1" shape-rendering="auto"/>
<text x="806.70" y="674.95" font-size="13.5" fill="#4877B2" text-anchor="middle" shape-rendering="auto">19 188 871</text>
<rect x="815.70" y="762.90" width="53.60" height="18.00" fill="#fff" stroke="#4BACC6" stroke-width="1" shape-rendering="auto"/>
<text x="842.50" y="776.75" font-size="13.5" fill="#449FB9" text-anchor="middle" shape-rendering="auto">241 129</text>
<rect x="861.80" y="678.50" width="74.40" height="18.00" fill="#fff" stroke="#8064A2" stroke-width="1" shape-rendering="auto"/>
<text x="899.00" y="692.35" font-size="13.5" fill="#785C9A" text-anchor="middle" shape-rendering="auto">16 444 981</text>
<rect x="834.60" y="707.00" width="74.40" height="18.00" fill="#fff" stroke="#4F81BD" stroke-width="1" shape-rendering="auto"/>
<text x="871.80" y="720.85" font-size="13.5" fill="#4877B2" text-anchor="middle" shape-rendering="auto">11 107 515</text>
<rect x="856.50" y="730.00" width="67.00" height="18.00" fill="#fff" stroke="#9BBB59" stroke-width="1" shape-rendering="auto"/>
<text x="890.00" y="743.85" font-size="13.5" fill="#8FAE4E" text-anchor="middle" shape-rendering="auto">8 659 550</text>
<rect x="881.00" y="763.90" width="53.60" height="18.00" fill="#fff" stroke="#4BACC6" stroke-width="1" shape-rendering="auto"/>
<text x="907.80" y="777.75" font-size="13.5" fill="#449FB9" text-anchor="middle" shape-rendering="auto">159 554</text>
<rect x="942.5" y="117.5" width="115" height="116" fill="#fff" stroke="#C4C4C4" stroke-width="1"/>
<rect x="947.3" y="121.9" width="22" height="16.5" fill="#4F81BD" stroke="#3E6DA6" stroke-width="0.6" shape-rendering="auto"/>
<text x="976" y="135.1" font-size="13.8" textLength="75.3" lengthAdjust="spacing" fill="#2B2B3B" shape-rendering="auto">1. Telephely</text>
<rect x="947.3" y="144.4" width="22" height="16.5" fill="#C0504D" stroke="#A8403D" stroke-width="0.6" shape-rendering="auto"/>
<text x="976" y="157.6" font-size="13.8" textLength="75.3" lengthAdjust="spacing" fill="#2B2B3B" shape-rendering="auto">2. Telephely</text>
<rect x="947.3" y="166.9" width="22" height="16.5" fill="#9BBB59" stroke="#85A446" stroke-width="0.6" shape-rendering="auto"/>
<text x="976" y="180.1" font-size="13.8" textLength="75.3" lengthAdjust="spacing" fill="#2B2B3B" shape-rendering="auto">4. Telephely</text>
<rect x="947.3" y="189.4" width="22" height="16.5" fill="#8064A2" stroke="#6B518C" stroke-width="0.6" shape-rendering="auto"/>
<text x="976" y="202.6" font-size="13.8" textLength="75.3" lengthAdjust="spacing" fill="#2B2B3B" shape-rendering="auto">5. Telephely</text>
<rect x="947.3" y="211.9" width="22" height="16.5" fill="#4BACC6" stroke="#3A96AF" stroke-width="0.6" shape-rendering="auto"/>
<text x="976" y="225.1" font-size="13.8" textLength="75.3" lengthAdjust="spacing" fill="#2B2B3B" shape-rendering="auto">6. Telephely</text>
</svg>
<svg class="ov" width="1556" height="912" viewBox="0 0 1556 912" style="left:0;top:0;pointer-events:none"><path d="M1077.6 489.6 l3 3 -3 3z" fill="#6A6A6A"/><path d="M1.8 473.8 l3.6 2.7 -3.6 2.7z" fill="#5A5A5A"/></svg>
<div id="rightpanel"></div>
<div class="abs" style="left:1092.50px;top:111.90px;font-size:20.2px;line-height:1;color:#3A3A3A;white-space:pre;letter-spacing:-0.311px;">Grafikon beállításai</div>
<svg class="ov" width="1556" height="912" viewBox="0 0 1556 912" style="left:0;top:0;pointer-events:none"><path d="M1319.9 144.4 L1324.5 139.6 L1329.1 144.4z" fill="#C9C9C9"/></svg>
<svg class="ov" width="1556" height="912" viewBox="0 0 1556 912" style="left:0;top:0;pointer-events:none"><rect x="1099.8" y="159.4" width="17.2" height="17.2" rx="1.6" fill="#8E4FB8"/><rect x="1102.8" y="160.6" width="11.2" height="7.2" fill="#F4F0F8"/><line x1="1104.4" y1="162.6" x2="1112.4" y2="162.6" stroke="#B9A3CE" stroke-width="0.9"/><line x1="1104.4" y1="165" x2="1112.4" y2="165" stroke="#B9A3CE" stroke-width="0.9"/><rect x="1103.6" y="170.6" width="9.6" height="6" fill="#F4F0F8"/><rect x="1105" y="171.8" width="3" height="4.8" fill="#8E4FB8"/></svg>
<div class="abs" style="left:1124.00px;top:160.70px;font-size:15px;line-height:1;color:#2B2B2B;white-space:pre;letter-spacing:0.793px;font-weight:bold;-webkit-text-stroke:0.3px currentColor;">Mentett beállítások</div>
<svg class="ov" width="1556" height="912" viewBox="0 0 1556 912" style="left:0;top:0;pointer-events:none"><path d="M1533.5 170.8 L1538.5 165.6 L1543.5 170.8" fill="none" stroke="#5A5A5A" stroke-width="1.7" stroke-linejoin="miter"/></svg>
<div class="abs" style="left:1088px;top:188px;width:468px;height:1px;box-sizing:border-box;background:#E2E2E2;"></div>
<div class="abs" style="left:1087.6px;top:190.2px;width:48.6px;height:44.6px;box-sizing:border-box;background:linear-gradient(#FFFFFF,#F8F8F8);border:1px solid #B2B2B2;"></div>
<div class="abs" style="left:1142.5px;top:190.2px;width:48.6px;height:44.6px;box-sizing:border-box;background:linear-gradient(#FFFFFF,#F8F8F8);border:1px solid #B2B2B2;"></div>
<div class="abs" style="left:1197.4px;top:190.2px;width:48.6px;height:44.6px;box-sizing:border-box;background:linear-gradient(#FFFFFF,#F8F8F8);border:1px solid #B2B2B2;"></div>
<div class="abs" style="left:1252.3px;top:190.2px;width:48.6px;height:44.6px;box-sizing:border-box;background:linear-gradient(#FFFFFF,#F8F8F8);border:1px solid #B2B2B2;"></div>
<div class="abs" style="left:1307.2px;top:190.2px;width:48.6px;height:44.6px;box-sizing:border-box;background:linear-gradient(#FFFFFF,#F8F8F8);border:1px solid #B2B2B2;"></div>
<svg class="ov" width="1556" height="912" viewBox="0 0 1556 912" style="left:0;top:0;pointer-events:none"><defs><linearGradient id="flG" x1="0" y1="0" x2="0" y2="1"><stop offset="0" stop-color="#56668A"/><stop offset="1" stop-color="#38445F"/></linearGradient><linearGradient id="grG" x1="0" y1="0" x2="0" y2="1"><stop offset="0" stop-color="#C6EE62"/><stop offset="1" stop-color="#6DB51E"/></linearGradient><linearGradient id="erR" x1="0" y1="0" x2="1" y2="1"><stop offset="0" stop-color="#F7A184"/><stop offset="1" stop-color="#D4412B"/></linearGradient><linearGradient id="erB" x1="0" y1="0" x2="1" y2="1"><stop offset="0" stop-color="#8CC6EE"/><stop offset="1" stop-color="#3F8ED4"/></linearGradient><linearGradient id="prG" x1="0" y1="0" x2="0" y2="1"><stop offset="0" stop-color="#F2F5FA"/><stop offset="1" stop-color="#B4C0D8"/></linearGradient><linearGradient id="ppG" x1="0" y1="0" x2="0" y2="1"><stop offset="0" stop-color="#FFFFFF"/><stop offset="1" stop-color="#D4DCEC"/></linearGradient><linearGradient id="rfG" x1="0" y1="0" x2="0" y2="1"><stop offset="0" stop-color="#F4F6FB"/><stop offset="1" stop-color="#C4CEE4"/></linearGradient><linearGradient id="unG2" x1="0" y1="0" x2="1" y2="1"><stop offset="0" stop-color="#9AD0F6"/><stop offset="0.55" stop-color="#4A98E0"/><stop offset="1" stop-color="#1A5CB0"/></linearGradient></defs><rect x="1094.6" y="199" width="30.2" height="30" rx="2.2" fill="url(#flG)"/><rect x="1102.6" y="199.6" width="14.4" height="10.6" fill="#BCD4EE"/><rect x="1100.8" y="199.6" width="2.6" height="10.6" fill="#2F3A54"/><rect x="1100.8" y="218" width="19.2" height="10.8" fill="#F4F7FB"/><rect x="1100.8" y="225.4" width="19.2" height="3.4" fill="#5FA2DA"/><path d="M1111 199.8 h6.8 v-6 l12.6 9 -12.6 9.4 v-6 h-6.8z" fill="url(#grG)" stroke="#EAF6D2" stroke-width="0.9"/><g transform="translate(1165.2,212.2) rotate(-42)"><path d="M-17.5 -6.6 a3.4 3.4 0 0 1 3.4-3.4 h28.2 a3.4 3.4 0 0 1 3.4 3.4 v11.6 a3.4 3.4 0 0 1 -3.4 3.4 h-25 q-6.6 0 -6.6 -6z" fill="url(#erR)"/><path d="M-17.5 -6.6 a3.4 3.4 0 0 1 3.4-3.4 h9.6 v18.4 h-6.4 q-6.6 0 -6.6 -6z" fill="url(#erB)"/><rect x="-16" y="3.2" width="33" height="1.5" fill="#FFFFFF" fill-opacity="0.4"/><rect x="-16" y="5.6" width="33" height="1" fill="#FFFFFF" fill-opacity="0.25"/></g><rect x="1210.4" y="193.4" width="21.6" height="15.6" fill="url(#ppG)" stroke="#AEB8D0" stroke-width="0.8"/><rect x="1202" y="204" width="38" height="22.6" rx="4" fill="url(#prG)" stroke="#8D9ABC" stroke-width="0.9"/><rect x="1210.4" y="196" width="21.6" height="12.4" fill="url(#ppG)"/><path d="M1207.2 208 h27.4 v3 a3.4 3.4 0 0 1 -3.4 3.4 h-20.6 a3.4 3.4 0 0 1 -3.4 -3.4z" fill="#56668C"/><rect x="1210" y="219.8" width="22.6" height="10" fill="#FFFFFF" stroke="#8D9ABC" stroke-width="0.9"/><rect x="1212" y="222" width="18.6" height="6.4" fill="#74B6E4"/><g fill="url(#rfG)" stroke="#8E9BC2" stroke-width="1" stroke-linejoin="round"><path d="M1258.6000000000001 212.29999999999998 C1259.2 201.7 1267.2 195.1 1275.8 195.1 C1280.2 195.1 1284.2 196.7 1287.2 199.7 L1290.8 196.7 L1291.0 210.89999999999998 L1277.8 210.1 L1281.6000000000001 206.29999999999998 C1279.8 204.1 1277.6000000000001 203.1 1275.4 203.1 C1270.2 203.1 1265.8 207.1 1265.4 212.29999999999998z"/><path d="M1291.8 214.29999999999998 C1291.2 222.7 1283.8 228.7 1275.4 228.7 C1270.8 228.7 1266.8 227.1 1263.8 224.29999999999998 L1260.2 227.7 L1259.6000000000001 214.1 L1273.2 214.29999999999998 L1269.4 218.29999999999998 C1271.2 220.1 1273.2 220.89999999999998 1275.4 220.89999999999998 C1280.2 220.89999999999998 1284.4 218.1 1285.2 214.29999999999998z"/></g><path d="M1316.20 209.36 L1320.20 195.60 L1324.78 200.42 C1331.93 196.29 1341.37 197.66 1343.94 207.98 C1345.94 216.93 1340.80 225.87 1335.08 230.00 L1333.36 228.62 C1337.36 221.74 1339.65 214.18 1336.22 208.67 C1333.93 205.92 1331.07 206.61 1328.21 207.98 L1331.64 212.80 Z" fill="url(#unG2)" stroke="#2D73C4" stroke-width="0.5" stroke-linejoin="round"/></svg>
<div class="abs" style="left:1087px;top:237px;width:469px;height:28px;box-sizing:border-box;background:linear-gradient(#DADADA,#D0D0D0);"></div>
<div class="abs" style="left:1102.50px;top:245.89px;font-size:13.6px;line-height:1;color:#2B2B2B;white-space:pre;letter-spacing:0.733px;font-weight:bold;-webkit-text-stroke:0.3px currentColor;">Elmentett beállítások</div>
<div class="abs" style="left:1087px;top:265px;width:469px;height:155px;box-sizing:border-box;background:#FFFFFF;border:1px solid #C9C9C9;border-right:none;"></div>
<div class="abs" style="left:1088px;top:265px;width:468px;height:31px;box-sizing:border-box;background:#F0F0F0;border-bottom:1px solid #C4C4C4;"></div>
<div class="abs" style="left:1201px;top:268px;width:1px;height:80px;box-sizing:border-box;background:#CFCFCF;"></div>
<div class="abs" style="left:1326px;top:268px;width:1px;height:80px;box-sizing:border-box;background:#CFCFCF;"></div>
<div class="abs" style="left:1201px;top:268px;width:1px;height:27px;box-sizing:border-box;background:#A8A8A8;"></div>
<div class="abs" style="left:1326px;top:268px;width:1px;height:27px;box-sizing:border-box;background:#A8A8A8;"></div>
<div class="abs" style="left:1094.00px;top:274.96px;font-size:13.4px;line-height:1;color:#8C8C8C;white-space:pre;letter-spacing:-0.035px;">Grafikon neve</div>
<div class="abs" style="left:1207.00px;top:274.96px;font-size:13.4px;line-height:1;color:#8C8C8C;white-space:pre;letter-spacing:0.100px;">Alapértelmezett</div>
<div class="abs" style="left:1089px;top:322px;width:238px;height:27px;box-sizing:border-box;background:#AAD5E7;"></div>
<div class="abs" style="left:1201px;top:322px;width:1px;height:27px;box-sizing:border-box;background:#9CC5D6;"></div>
<div class="abs" style="left:1094.00px;top:302.66px;font-size:13.4px;line-height:1;color:#2B2B2B;white-space:pre;letter-spacing:-1.282px;">VONAL</div>
<div class="abs" style="left:1094.60px;top:328.96px;font-size:13.4px;line-height:1;color:#00008B;white-space:pre;letter-spacing:-0.419px;font-weight:bold;-webkit-text-stroke:0.3px currentColor;">OSZLOP</div>
<div class="abs" style="left:1256px;top:300px;width:17px;height:17px;box-sizing:border-box;background:#FFFFFF;border:1px solid #ABABAB;"></div>
<div class="abs" style="left:1256px;top:327px;width:17px;height:17px;box-sizing:border-box;background:#FFFFFF;border:1px solid #ABABAB;"></div>
<svg class="ov" width="1556" height="912" viewBox="0 0 1556 912" style="left:0;top:0;pointer-events:none"><path d="M1259.6 336.2 l3 3 6.2-7" fill="none" stroke="#7A7A7A" stroke-width="1.5"/></svg>
<div class="abs" style="left:1078.8px;top:261px;width:277px;height:121px;box-sizing:border-box;border:3px solid #D8202B;"></div>
<div class="abs" style="left:1222.7px;top:317.8px;width:79px;height:39px;box-sizing:border-box;border:3px solid #D8202B;"></div>
<div class="abs" style="left:1153.30px;top:400.48px;font-size:14.2px;line-height:1;color:#333;white-space:pre;letter-spacing:-0.091px;">Rekord: 2 / 2</div>
<svg class="ov" width="1556" height="912" viewBox="0 0 1556 912" style="left:0;top:0;pointer-events:none"><rect x="1093" y="403.1" width="1.4" height="7.2" fill="#8A8A8A"/><path d="M1095.2 406.7 l4.4-3.6 v7.2z" fill="#8A8A8A"/><path d="M1100.6 406.7 l4.4-3.6 v7.2z" fill="#8A8A8A"/><path d="M1114.6 406.7 l4.4-3.6 v7.2z" fill="#8A8A8A"/><path d="M1119.6 406.7 l4.4-3.6 v7.2z" fill="#8A8A8A"/><path d="M1136.9 406.7 l4.4-3.6 v7.2z" fill="#8A8A8A"/><path d="M1252.4 406.7 l-4.4-3.6 v7.2z" fill="#B4B4B4"/><path d="M1268.6000000000001 406.7 l-4.4-3.6 v7.2z" fill="#B4B4B4"/><path d="M1273.6000000000001 406.7 l-4.4-3.6 v7.2z" fill="#B4B4B4"/><path d="M1286.4 406.7 l-4.4-3.6 v7.2z" fill="#B4B4B4"/><path d="M1291.6000000000001 406.7 l-4.4-3.6 v7.2z" fill="#B4B4B4"/><rect x="1292.6" y="403.1" width="1.4" height="7.2" fill="#B4B4B4"/><rect x="1296.4" y="396.6" width="260" height="20.2" fill="#EFEFEF"/><rect x="1297.5" y="398.5" width="19" height="16.5" fill="#FFFFFF" stroke="#E4E4E4"/><path d="M1303 406.7 l5.4-4.2 v8.4z" fill="#CDCDCD"/><rect x="1540.5" y="398.5" width="19" height="16.5" fill="#FFFFFF" stroke="#E4E4E4"/><path d="M1553.6 406.7 l-4.4-4.2 v8.4z" fill="#CDCDCD"/></svg>
<svg class="ov" width="1556" height="912" viewBox="0 0 1556 912" style="left:0;top:0;pointer-events:none"><rect x="1099.2" y="442.4" width="3.6" height="7.8" fill="#4A80C4"/><rect x="1104.4" y="437.8" width="3.6" height="12.4" fill="#EDB24C"/><rect x="1109.6" y="431.6" width="3.6" height="18.6" fill="#5FA388"/><rect x="1114.8" y="435.4" width="3.6" height="14.8" fill="#E2663E"/></svg>
<div class="abs" style="left:1124.30px;top:433.20px;font-size:15px;line-height:1;color:#2B2B2B;white-space:pre;letter-spacing:0.096px;font-weight:bold;-webkit-text-stroke:0.3px currentColor;">Diagram</div>
<svg class="ov" width="1556" height="912" viewBox="0 0 1556 912" style="left:0;top:0;pointer-events:none"><path d="M1533.5 443.40000000000003 L1538.5 438.20000000000005 L1543.5 443.40000000000003" fill="none" stroke="#5A5A5A" stroke-width="1.7" stroke-linejoin="miter"/></svg>
<div class="abs" style="left:1087px;top:461px;width:469px;height:26.6px;box-sizing:border-box;background:#D1D1D1;"></div>
<div class="abs" style="left:1102.70px;top:467.72px;font-size:13.8px;line-height:1;color:#2B2B2B;white-space:pre;letter-spacing:0.256px;font-weight:bold;-webkit-text-stroke:0.3px currentColor;">DIAGRAM TÍPUSA</div>
<div class="abs" style="left:1530.8px;top:461px;width:27px;height:26.2px;box-sizing:border-box;background:#D8D8D8;border:1.6px solid #AEAEAE;"></div>
<svg class="ov" width="1556" height="912" viewBox="0 0 1556 912" style="left:0;top:0;pointer-events:none"><path d="M1537.2 473 C1540.4 465.8 1551.6 465.8 1554.8 473 C1551.6 479.6 1540.4 479.6 1537.2 473z" fill="#FBFBFD" stroke="#6F86C0" stroke-width="1.1"/><path d="M1537.4 471 C1540.6 464.4 1551.4 464.4 1554.6 471" fill="none" stroke="#CB8E58" stroke-width="1.3"/><circle cx="1546" cy="472.4" r="4.2" fill="#7C97C4"/><circle cx="1546" cy="472.4" r="2.6" fill="#5471A6"/><circle cx="1546" cy="472.2" r="1.5" fill="#26386A"/></svg>
<div class="abs" style="left:1087px;top:487px;width:469px;height:58px;box-sizing:border-box;background:#F3F3F3;border-bottom:1px solid #D2D2D2;"></div>
<div class="abs" style="left:1096.20px;top:492.32px;font-size:13.8px;line-height:1;color:#2B2B2B;white-space:pre;letter-spacing:0.528px;font-weight:bold;-webkit-text-stroke:0.3px currentColor;">Bar[XYDiagram]</div>
<div class="abs" style="left:1096px;top:508px;width:470px;height:32px;box-sizing:border-box;background:#FFFFFF;border:1px solid #B2B2B2;"></div>
<svg class="ov" width="1556" height="912" viewBox="0 0 1556 912" style="left:0;top:0;pointer-events:none"><rect x="1102.2" y="523.8" width="3.4" height="7.6" fill="#4A80C4"/><rect x="1107.2" y="520" width="3.4" height="11.4" fill="#EE9A3C"/><rect x="1112.2" y="516.4" width="3.4" height="15" fill="#D8384A"/></svg>
<div class="abs" style="left:1126.60px;top:513.90px;font-size:20.2px;line-height:1;color:#333;white-space:pre;letter-spacing:-0.914px;">Oszlop</div>
<svg class="ov" width="1556" height="912" viewBox="0 0 1556 912" style="left:0;top:0;pointer-events:none"><path d="M1543.6 522.6 h7.2 l-3.6 3.8z" fill="#5E5E5E"/></svg>
<div class="abs" style="left:1087.6px;top:553px;width:110px;height:47px;box-sizing:border-box;background:linear-gradient(#FFFFFF,#F6F6F6);border:1px solid #C2C2C2;"></div>
<div class="abs" style="left:1200px;top:553px;width:110px;height:47px;box-sizing:border-box;background:#EDEDED;border:1px solid #D8D8D8;"></div>
<div class="abs" style="left:1312.3px;top:553px;width:110px;height:47px;box-sizing:border-box;background:linear-gradient(#FFFFFF,#F6F6F6);border:1px solid #C2C2C2;"></div>
<div class="abs" style="left:1424.8px;top:553px;width:110px;height:47px;box-sizing:border-box;background:linear-gradient(#FFFFFF,#F6F6F6);border:1px solid #C2C2C2;"></div>
<div class="abs" style="left:1138.05px;top:562.59px;font-size:13.6px;line-height:1;color:#2B2B2B;white-space:pre;letter-spacing:-0.271px;">Grafikon</div>
<div class="abs" style="left:1135.50px;top:578.29px;font-size:13.6px;line-height:1;color:#2B2B2B;white-space:pre;letter-spacing:0.209px;">elforgatá</div>
<div class="abs" style="left:1248.95px;top:562.59px;font-size:13.6px;line-height:1;color:#A2A2A2;white-space:pre;">Forgatás</div>
<div class="abs" style="left:1254.80px;top:578.29px;font-size:13.6px;line-height:1;color:#A2A2A2;white-space:pre;letter-spacing:-0.156px;">egérrel</div>
<div class="abs" style="left:1361.50px;top:569.99px;font-size:13.6px;line-height:1;color:#2B2B2B;white-space:pre;letter-spacing:-0.139px;">Nagyítás</div>
<div class="abs" style="left:1471.50px;top:569.99px;font-size:13.6px;line-height:1;color:#2B2B2B;white-space:pre;letter-spacing:-0.180px;">Mozgatás</div>
<svg class="ov" width="1556" height="912" viewBox="0 0 1556 912" style="left:0;top:0;pointer-events:none"><defs><linearGradient id="rtG" x1="0" y1="0" x2="0" y2="1"><stop offset="0" stop-color="#E6F4FD"/><stop offset="1" stop-color="#5AA6E4"/></linearGradient><linearGradient id="gyG" x1="0" y1="0" x2="0" y2="1"><stop offset="0" stop-color="#E2E2E2"/><stop offset="1" stop-color="#B4B4B4"/></linearGradient></defs><path d="M1092.5 559.5 v35 h35" fill="none" stroke="#2E3A5C" stroke-width="1"/><path d="M1096 565.4 L1106.4 557.6 L1106.4 562 C1116 562 1122 568 1123.4 577.6 L1128.4 577.6 L1119.4 593.2 L1108.6 577.6 L1114 577.6 C1113.6 572.4 1110.6 569.6 1106.4 569.4 L1106.4 573.6 Z" fill="url(#rtG)" stroke="#3D86CE" stroke-width="0.9" stroke-linejoin="round"/><circle cx="1215.4" cy="585.4" r="10.2" fill="url(#gyG)" stroke="#B9B9B9" stroke-width="0.8"/><path d="M1215.4 585.4 v-10.2 a10.2 10.2 0 0 0 -10.2 10.2z" fill="#D6D6D6" stroke="#E0E0E0" stroke-width="0.8"/><path d="M1213 566.4 C1222 556 1236 562 1236.4 574.6 L1241.4 574.6 L1232.6 587.6 L1223.4 574.6 L1228.4 574.6 C1228 569 1223 566.4 1219 569.6 Z" fill="url(#gyG)" stroke="#ADADAD" stroke-width="0.8" stroke-linejoin="round"/><rect x="1322" y="568" width="8.2" height="14" fill="#6FAE93"/><rect x="1332.3" y="561.7" width="7.4" height="29.2" fill="#EFBE5C"/><rect x="1342.3" y="572.8" width="7.7" height="18.1" fill="#4385C6"/><circle cx="1328" cy="584.6" r="5.3" fill="#FFFFFF" stroke="#3C7EC4" stroke-width="2"/><line x1="1324" y1="588.8" x2="1317.4" y2="594.6" stroke="#3C7EC4" stroke-width="2.6" stroke-linecap="round"/><rect x="1431.5" y="559.5" width="34.5" height="34" fill="#E9EEF8" stroke="#8FA6D2" stroke-width="1"/><path d="M0 -12 l3.4 4.2 h-2.2 v3.4 h-2.4 v-3.4 h-2.2z" transform="translate(1448.6,576.4) rotate(0)" fill="#1E2A4E"/><path d="M0 -12 l3.4 4.2 h-2.2 v3.4 h-2.4 v-3.4 h-2.2z" transform="translate(1448.6,576.4) rotate(90)" fill="#1E2A4E"/><path d="M0 -12 l3.4 4.2 h-2.2 v3.4 h-2.4 v-3.4 h-2.2z" transform="translate(1448.6,576.4) rotate(180)" fill="#1E2A4E"/><path d="M0 -12 l3.4 4.2 h-2.2 v3.4 h-2.4 v-3.4 h-2.2z" transform="translate(1448.6,576.4) rotate(270)" fill="#1E2A4E"/></svg>
<div class="abs" style="left:1123.70px;top:625.80px;font-size:15px;line-height:1;color:#2B2B2B;white-space:pre;letter-spacing:0.392px;font-weight:bold;-webkit-text-stroke:0.3px currentColor;">Megjelenés</div>
<svg class="ov" width="1556" height="912" viewBox="0 0 1556 912" style="left:0;top:0;pointer-events:none"><path d="M1533.8 630.1 L1538.8 635.3 L1543.8 630.1" fill="none" stroke="#5A5A5A" stroke-width="1.7" stroke-linejoin="miter"/></svg>
<div class="abs" style="left:1123.70px;top:665.60px;font-size:15px;line-height:1;color:#2B2B2B;white-space:pre;letter-spacing:0.541px;font-weight:bold;-webkit-text-stroke:0.3px currentColor;">Értéksorozatok</div>
<svg class="ov" width="1556" height="912" viewBox="0 0 1556 912" style="left:0;top:0;pointer-events:none"><path d="M1533.8 669.9 L1538.8 675.0999999999999 L1543.8 669.9" fill="none" stroke="#5A5A5A" stroke-width="1.7" stroke-linejoin="miter"/></svg>
<div class="abs" style="left:1123.70px;top:705.50px;font-size:15px;line-height:1;color:#2B2B2B;white-space:pre;letter-spacing:0.375px;font-weight:bold;-webkit-text-stroke:0.3px currentColor;">Jelmagyarázat</div>
<svg class="ov" width="1556" height="912" viewBox="0 0 1556 912" style="left:0;top:0;pointer-events:none"><path d="M1533.8 709.8000000000001 L1538.8 715.0 L1543.8 709.8000000000001" fill="none" stroke="#5A5A5A" stroke-width="1.7" stroke-linejoin="miter"/></svg>
<div class="abs" style="left:1123.70px;top:745.70px;font-size:15px;line-height:1;color:#2B2B2B;white-space:pre;letter-spacing:-0.669px;font-weight:bold;-webkit-text-stroke:0.3px currentColor;">Cím</div>
<svg class="ov" width="1556" height="912" viewBox="0 0 1556 912" style="left:0;top:0;pointer-events:none"><path d="M1533.8 750.0 L1538.8 755.1999999999999 L1543.8 750.0" fill="none" stroke="#5A5A5A" stroke-width="1.7" stroke-linejoin="miter"/></svg>
<div class="abs" style="left:1123.70px;top:785.60px;font-size:15px;line-height:1;color:#2B2B2B;white-space:pre;letter-spacing:-0.006px;font-weight:bold;-webkit-text-stroke:0.3px currentColor;">Címke</div>
<svg class="ov" width="1556" height="912" viewBox="0 0 1556 912" style="left:0;top:0;pointer-events:none"><path d="M1533.8 789.9 L1538.8 795.0999999999999 L1543.8 789.9" fill="none" stroke="#5A5A5A" stroke-width="1.7" stroke-linejoin="miter"/></svg>
<div class="abs" style="left:1123.70px;top:825.50px;font-size:15px;line-height:1;color:#2B2B2B;white-space:pre;letter-spacing:0.712px;font-weight:bold;-webkit-text-stroke:0.3px currentColor;">X-, Y-tengely</div>
<svg class="ov" width="1556" height="912" viewBox="0 0 1556 912" style="left:0;top:0;pointer-events:none"><path d="M1533.8 829.8000000000001 L1538.8 835.0 L1543.8 829.8000000000001" fill="none" stroke="#5A5A5A" stroke-width="1.7" stroke-linejoin="miter"/></svg>
<svg class="ov" width="1556" height="912" viewBox="0 0 1556 912" style="left:0;top:0;pointer-events:none"><rect x="1098.7" y="623.7" width="19.2" height="18.6" rx="1" fill="#FFFFFF" stroke="#9AA4D2" stroke-width="1"/><path d="M1101.4 629.6 L1108.4 633.4 L1115.2 626.6 V639.6 H1101.4z" fill="#9CCDED" stroke="#5A9AD4" stroke-width="0.7"/><path d="M1108.4 633.4 L1115.2 626.6 V633.4z" fill="#F0A64A"/><path d="M1099.6 663 L1109.6 666.6 V677 L1099.6 680.6z" fill="#F2A15A" stroke="#E0764A" stroke-width="0.7"/><path d="M1099.6 663 L1106 665.4 L1099.6 672z" fill="#E8604C"/><circle cx="1106.4" cy="671.6" r="3.8" fill="#8FC0EA" stroke="#6C9CD8" stroke-width="0.7"/><g fill="#FFFFFF" stroke="#8E9CD0" stroke-width="0.8"><rect x="1113" y="663.6" width="5" height="3.4"/><rect x="1113" y="669.8" width="5" height="3.4"/><rect x="1113" y="676" width="5" height="3.4"/></g><path d="M1110 671.5 h3 M1111.4 665.3 v12.4 M1111.4 665.3 h1.6 M1111.4 677.7 h1.6" fill="none" stroke="#8E9CD0" stroke-width="0.8"/><rect x="1101.8" y="705.2" width="3.6" height="3.4" fill="#3F78C6"/><rect x="1101.8" y="710.4" width="3.6" height="3.4" fill="#EDB95A"/><rect x="1101.8" y="715.6" width="3.6" height="3.4" fill="#5FA59A"/><g fill="#9A9A9A"><rect x="1107.4" y="706.2" width="7.6" height="1.3"/><rect x="1107.4" y="711.4" width="7.6" height="1.3"/><rect x="1107.4" y="716.6" width="7.6" height="1.3"/></g><path d="M1115.2 749.6 l2.6 2.6 -7.6 7.6 -2.6 -2.6z" fill="#F2B03E" stroke="#B87A22" stroke-width="0.6"/><path d="M1107.6 757.2 l2.6 2.6 -3.6 1.2z" fill="#E8D0A0" stroke="#8A6A3A" stroke-width="0.4"/><path d="M1106.6 761 l0.5-1.6 1.1 1.1z" fill="#3A3A3A"/><path d="M1116.1 750.5 l1.7 1.7" stroke="#D4882A" stroke-width="1.1"/><rect x="1098.9" y="783.4" width="18" height="17.4" fill="#FFFFFF" stroke="#A2AAD4" stroke-width="1"/><rect x="1098.9" y="823.5" width="18" height="17.4" fill="#FFFFFF" stroke="#A2AAD4" stroke-width="1"/><path d="M1102.6 826 V837.4 H1114.8" fill="none" stroke="#3A4680" stroke-width="0.9"/><path d="M1103.6 838.8 h11" stroke="#5A66A0" stroke-width="1" stroke-dasharray="0.8 1.2" fill="none"/><path d="M1101.2 827.4 v9" stroke="#5A66A0" stroke-width="1" stroke-dasharray="0.8 1.2" fill="none"/><rect x="1098.9" y="864.6" width="18" height="4.6" fill="#BFE0F4" stroke="#A2AAD4" stroke-width="0.8"/></svg>
<div class="abs" style="left:1099.60px;top:742.35px;font-size:14px;line-height:1;color:#354080;white-space:pre;font-weight:bold;-webkit-text-stroke:0.3px currentColor;transform:scaleX(0.74);transform-origin:left center;letter-spacing:-0.4px;">Ab</div>
<div class="abs" style="left:1101.68px;top:783.59px;font-size:17.5px;line-height:1;color:#3B6FB0;white-space:pre;font-weight:bold;-webkit-text-stroke:0.3px currentColor;font-family:'Liberation Serif',serif;">A</div>
<div class="abs" style="left:1123.7px;top:866.4px;width:120px;height:3px;overflow:hidden"><div style="font-size:15px;font-weight:bold;line-height:1;margin-top:-1.1px;letter-spacing:0.5px;color:#2B2B2B">Szövegminták</div></div>
<svg class="ov" width="1556" height="912" viewBox="0 0 1556 912" style="left:0;top:0;pointer-events:none"><path d="M1320.0 872.6 L1324.6 877.4 L1329.1999999999998 872.6z" fill="#6E6E6E"/></svg>
<div id="bottom"></div>
<div id="bottomline"></div>
<div class="abs" style="left:52px;top:886.6px;width:1504px;height:7px;box-sizing:border-box;background:linear-gradient(#EEF0FA,#DDDFEC 35%,#DDDFEC 65%,#EEF0FA);border-radius:3px;"></div>
<div class="abs" style="left:31px;top:884px;width:19px;height:12px;box-sizing:border-box;background:#0FDFA6;border-radius:5px;"></div>
<svg class="ov" width="1556" height="912" viewBox="0 0 1556 912" style="left:0;top:0;pointer-events:none"><path d="M21.4 886.4 L17.4 890.1 L21.4 893.8" fill="none" stroke="#4A4A6A" stroke-width="1.8"/></svg>
</body>
</html>
